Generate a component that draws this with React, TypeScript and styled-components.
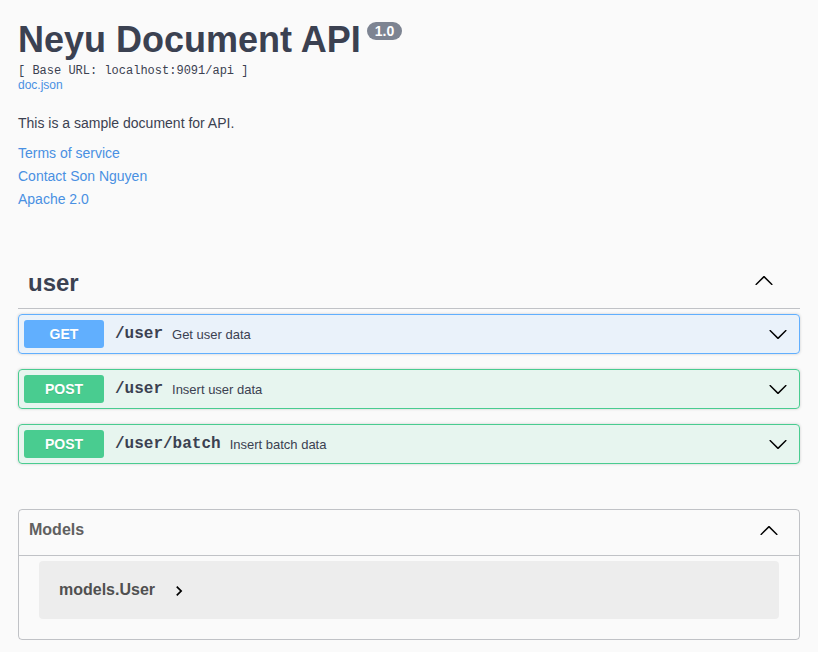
import React from "react";
import styled, { createGlobalStyle } from "styled-components";

const GlobalStyle = createGlobalStyle`
  html, body { margin: 0; padding: 0; background: #fafafa; }
  body {
    font-family: "Liberation Sans", Arial, sans-serif;
    color: #3b4151;
  }
  * { box-sizing: border-box; }
`;

const Page = styled.div`
  padding: 20px 18px 12px;
`;

const Info = styled.div`
  display: flex;
  flex-direction: column;
  align-items: flex-start;
`;

const Title = styled.h2`
  margin: 0;
  font-size: 36px;
  line-height: 40px;
  font-weight: 700;
  color: #3b4151;
  white-space: nowrap;
`;

const Version = styled.span`
  display: inline-flex;
  align-items: center;
  height: 18px;
  padding: 0 8px;
  margin: 2px 0 0 6px;
  vertical-align: top;
  border-radius: 57px;
  background: #7d8492;
  color: #fff;
  font-size: 14px;
  font-weight: 700;
  line-height: 18px;
`;

const BaseUrl = styled.pre`
  margin: 4px 0 0;
  font-family: "Liberation Mono", "Courier New", monospace;
  font-size: 12px;
  line-height: 14px;
  color: #3b4151;
`;

const Link = styled.a<{ $size?: number; $lh?: number }>`
  display: block;
  color: #4990e2;
  text-decoration: none;
  font-size: ${(p) => p.$size ?? 14}px;
  line-height: ${(p) => p.$lh ?? 23}px;
`;

const Description = styled.p`
  margin: 21px 0 0;
  font-size: 14px;
  line-height: 20px;
`;

const Links = styled.div`
  margin-top: 9px;
  display: flex;
  flex-direction: column;
`;

const TagSection = styled.section`
  margin-top: 46px;
`;

const TagHeader = styled.div`
  display: flex;
  align-items: center;
  justify-content: space-between;
  padding: 11px 26px 10px 10px;
  border-bottom: 1px solid rgba(59, 65, 81, 0.3);
`;

const TagTitle = styled.h3`
  margin: 0;
  font-size: 24px;
  line-height: 30px;
  font-weight: 700;
  color: #3b4151;
`;

const Ops = styled.div`
  margin-top: 5px;
  display: flex;
  flex-direction: column;
  gap: 15px;
`;

const methodColors: Record<string, string> = {
  GET: "97, 175, 254",
  POST: "73, 204, 144",
};

const OpBlock = styled.div<{ $rgb: string }>`
  display: flex;
  align-items: center;
  padding: 5px;
  border: 1px solid rgb(${(p) => p.$rgb});
  background: rgba(${(p) => p.$rgb}, 0.1);
  border-radius: 4px;
  box-shadow: 0 0 3px rgba(0, 0, 0, 0.19);
`;

const Method = styled.span<{ $rgb: string }>`
  display: flex;
  align-items: center;
  justify-content: center;
  width: 80px;
  height: 28px;
  border-radius: 3px;
  background: rgb(${(p) => p.$rgb});
  color: #fff;
  font-size: 14px;
  font-weight: 700;
  text-shadow: 0 1px 0 rgba(0, 0, 0, 0.1);
`;

const Path = styled.span`
  margin-left: 11px;
  font-family: "Liberation Mono", "Courier New", monospace;
  font-size: 16px;
  font-weight: 700;
  color: #3b4151;
`;

const Summary = styled.span`
  flex: 1;
  margin-left: 9px;
  font-size: 13px;
  color: #3b4151;
`;

const ArrowBox = styled.svg<{ $mr?: number; $mt?: number }>`
  width: 20px;
  height: 20px;
  flex: none;
  margin-right: ${(p) => p.$mr ?? 0}px;
  margin-top: ${(p) => p.$mt ?? 0}px;
  fill: #000;
`;

const Models = styled.section`
  margin-top: 45px;
  border: 1px solid rgba(59, 65, 81, 0.3);
  border-radius: 4px;
`;

const ModelsHeader = styled.div`
  display: flex;
  align-items: center;
  justify-content: space-between;
  padding: 10px 20px 15px 10px;
  border-bottom: 1px solid rgba(59, 65, 81, 0.3);
`;

const ModelsTitle = styled.h4`
  margin: 0;
  font-size: 16px;
  line-height: 20px;
  font-weight: 700;
  color: #606060;
`;

const ModelContainer = styled.div`
  margin: 5px 20px 20px;
  height: 58px;
  padding: 0 20px;
  display: flex;
  align-items: center;
  background: rgba(0, 0, 0, 0.05);
  border-radius: 4px;
`;

const ModelTitle = styled.span`
  font-size: 16px;
  line-height: 20px;
  font-weight: 700;
  color: #505050;
`;

const ModelToggle = styled.svg`
  width: 20px;
  height: 20px;
  margin-left: 14px;
  margin-top: 2px;
  fill: #000;
`;

const ArrowDown = () => (
  <ArrowBox viewBox="0 0 20 20" $mr={6}>
    <path d="M17.418 6.109c.272-.268.709-.268.979 0s.271.701 0 .969l-7.908 7.83c-.27.268-.707.268-.979 0l-7.908-7.83c-.27-.268-.27-.701 0-.969.271-.268.709-.268.979 0L10 13.25l7.418-7.141z" />
  </ArrowBox>
);

const ArrowUp = ({ mt = 0 }: { mt?: number }) => (
  <ArrowBox viewBox="0 0 20 20" $mt={mt}>
    <path d="M17.418 14.908c.272.268.709.268.979 0s.271-.701 0-.969l-7.908-7.83c-.27-.268-.707-.268-.979 0l-7.908 7.83c-.27.268-.27.701 0 .969.271.268.709.268.979 0L10 7.767l7.418 7.141z" />
  </ArrowBox>
);

const ops = [
  { method: "GET", path: "/user", summary: "Get user data" },
  { method: "POST", path: "/user", summary: "Insert user data" },
  { method: "POST", path: "/user/batch", summary: "Insert batch data" },
];

export default function App() {
  return (
    <>
      <GlobalStyle />
      <Page>
        <Info>
          <Title>
            Neyu Document API<Version>1.0</Version>
          </Title>
          <BaseUrl>[ Base URL: localhost:9091/api ]</BaseUrl>
          <Link href="#" $size={12} $lh={14}>doc.json</Link>
          <Description>This is a sample document for API.</Description>
          <Links>
            <Link href="#">Terms of service</Link>
            <Link href="#">Contact Son Nguyen</Link>
            <Link href="#">Apache 2.0</Link>
          </Links>
        </Info>

        <TagSection>
          <TagHeader>
            <TagTitle>user</TagTitle>
            <ArrowUp mt={-6} />
          </TagHeader>
          <Ops>
            {ops.map((op, i) => (
              <OpBlock key={i} $rgb={methodColors[op.method]}>
                <Method $rgb={methodColors[op.method]}>{op.method}</Method>
                <Path>{op.path}</Path>
                <Summary>{op.summary}</Summary>
                <ArrowDown />
              </OpBlock>
            ))}
          </Ops>
        </TagSection>

        <Models>
          <ModelsHeader>
            <ModelsTitle>Models</ModelsTitle>
            <ArrowUp />
          </ModelsHeader>
          <ModelContainer>
            <ModelTitle>models.User</ModelTitle>
            <ModelToggle viewBox="0 0 24 24">
              <path d="M10 6L8.59 7.41 13.17 12l-4.58 4.59L10 18l6-6z" />
            </ModelToggle>
          </ModelContainer>
        </Models>
      </Page>
    </>
  );
}
